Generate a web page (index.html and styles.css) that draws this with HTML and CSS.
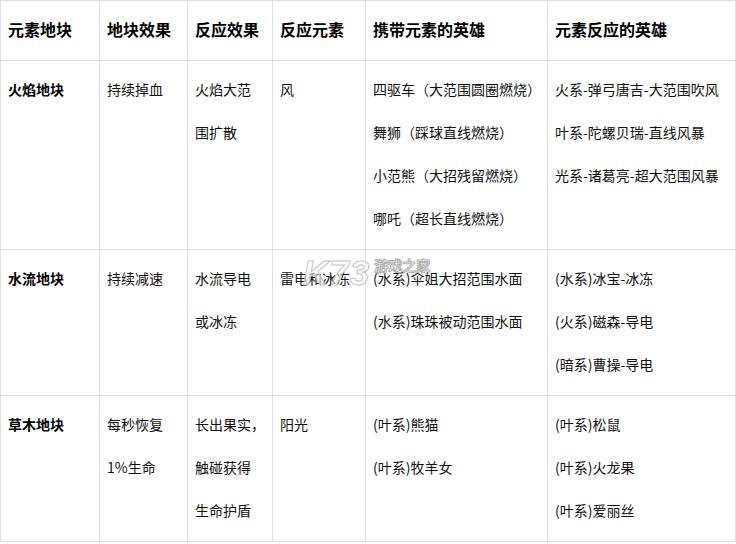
FILE: index.html
```html
<!DOCTYPE html>
<html lang="zh-CN">
<head>
<meta charset="utf-8">
<title>元素地块</title>
<link rel="stylesheet" href="styles.css">
</head>
<body>
<div class="wrap">
<table class="grid">
<colgroup>
<col class="c1"><col class="c2"><col class="c3"><col class="c4"><col class="c5"><col class="c6">
</colgroup>
<thead>
<tr><th>元素地块</th><th>地块效果</th><th>反应效果</th><th>反应元素</th><th>携带元素的英雄</th><th>元素反应的英雄</th></tr>
</thead>
<tbody>
<tr>
<td><b>火焰地块</b></td>
<td>持续掉血</td>
<td><p>火焰大范</p><p>围扩散</p></td>
<td>风</td>
<td><p>四驱车（大范围圆圈燃烧）</p><p>舞狮（踩球直线燃烧）</p><p>小范熊（大招残留燃烧）</p><p>哪吒（超长直线燃烧）</p></td>
<td><p>火系-弹弓唐吉-大范围吹风</p><p>叶系-陀螺贝瑞-直线风暴</p><p>光系-诸葛亮-超大范围风暴</p></td>
</tr>
<tr>
<td><b>水流地块</b></td>
<td>持续减速</td>
<td><p>水流导电</p><p>或冰冻</p></td>
<td>雷电和冰冻</td>
<td><p>(水系)伞姐大招范围水面</p><p>(水系)珠珠被动范围水面</p></td>
<td><p>(水系)冰宝-冰冻</p><p>(火系)磁森-导电</p><p>(暗系)曹操-导电</p></td>
</tr>
<tr>
<td><b>草木地块</b></td>
<td><p>每秒恢复</p><p>1%生命</p></td>
<td><p>长出果实，</p><p>触碰获得</p><p>生命护盾</p></td>
<td>阳光</td>
<td><p>(叶系)熊猫</p><p>(叶系)牧羊女</p></td>
<td><p>(叶系)松鼠</p><p>(叶系)火龙果</p><p>(叶系)爱丽丝</p></td>
</tr>
</tbody>
</table>
<div class="mark"><span class="mark-logo">K73</span><span class="mark-name">游戏之家</span></div>
</div>
</body>
</html>
```
FILE: styles.css
```css
html, body {
  margin: 0;
  padding: 0;
  background: #fff;
}
body {
  font-family: "Noto Sans CJK SC", "Liberation Sans", sans-serif;
  font-size: 14px;
  color: #111;
}
.wrap {
  position: relative;
  width: 736px;
  height: 544px;
  overflow: hidden;
}
.grid {
  border-collapse: collapse;
  table-layout: fixed;
  width: 735px;
}
.c1 { width: 99px; }
.c2 { width: 88px; }
.c3 { width: 85px; }
.c4 { width: 93px; }
.c5 { width: 182px; }
.c6 { width: 188px; }
.grid th, .grid td {
  border: 1px solid #dddde3;
  padding: 7px 7px 9px;
  text-align: left;
  vertical-align: top;
  line-height: 43px;
  font-weight: 400;
}
.grid th {
  font-size: 16px;
  font-weight: 700;
  color: #000;
}
.grid b {
  font-weight: 700;
  color: #000;
}
.grid p {
  margin: 0;
}
.mark {
  position: absolute;
  left: 303px;
  top: 255px;
  display: flex;
  align-items: flex-start;
  gap: 4px;
  pointer-events: none;
}
.mark-logo {
  font-family: "Liberation Sans", sans-serif;
  font-size: 35px;
  line-height: 36px;
  font-weight: 700;
  font-style: italic;
  letter-spacing: 1px;
  color: rgba(255, 255, 255, 0.5);
  -webkit-text-stroke: 1px #c4c4c4;
}
.mark-name {
  font-size: 14px;
  line-height: 20px;
  font-weight: 700;
  color: #fff;
  -webkit-text-stroke: 1px #b0b0b0;
}
```
